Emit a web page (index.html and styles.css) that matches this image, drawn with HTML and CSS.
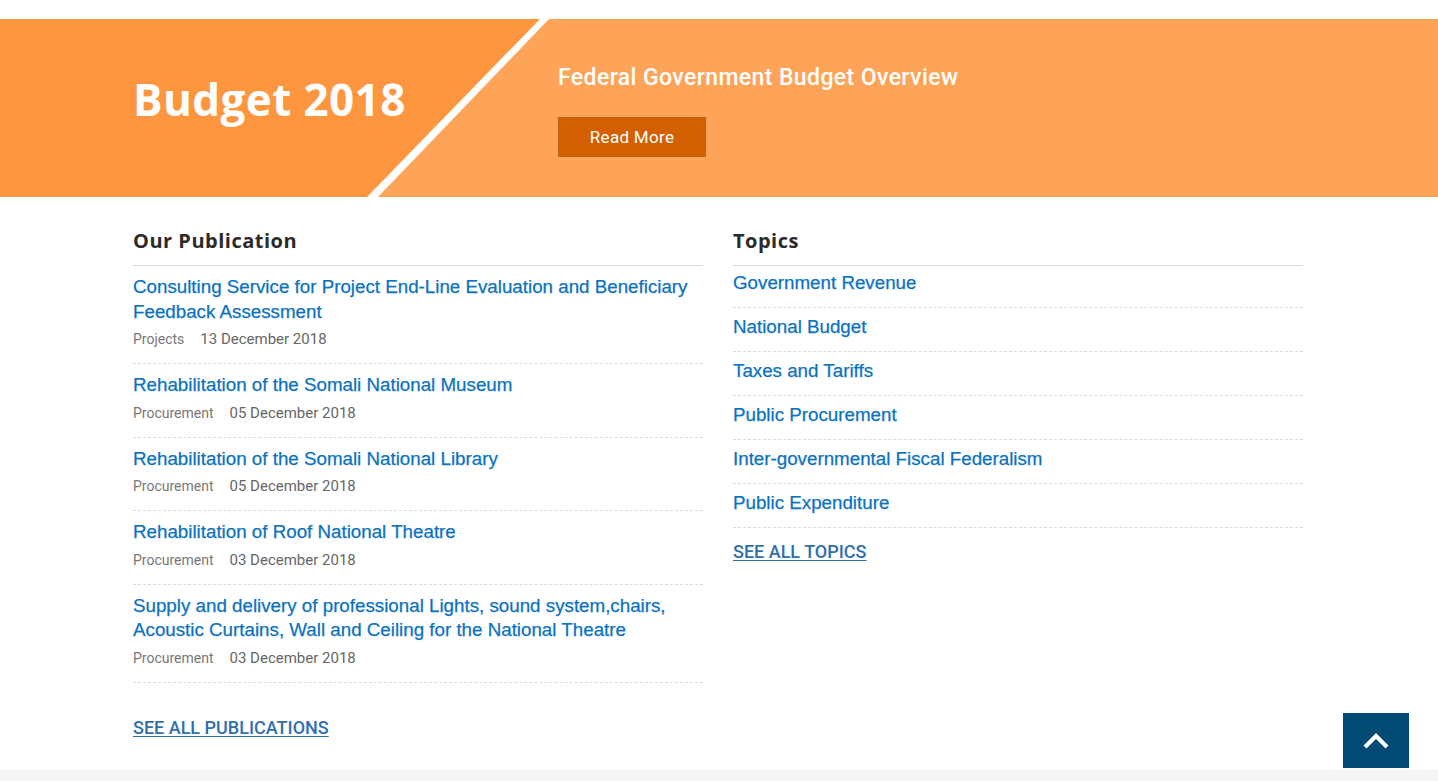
FILE: index.html
```html
<!DOCTYPE html>
<html lang="en">
<head>
  <meta charset="UTF-8">
  <meta name="viewport" content="width=device-width, initial-scale=1.0">
  <title>Budget 2018</title>
  <link rel="stylesheet" href="styles.css">
</head>
<body>

  <!-- Budget banner -->
  <section class="hero">
    <div class="hero-inner">
      <div class="hero-left">
        <h1 class="hero-title">Budget 2018</h1>
      </div>
      <div class="hero-right">
        <p class="hero-text">Federal Government Budget Overview</p>
        <a href="#" class="btn-read">Read More</a>
      </div>
    </div>
  </section>

  <main class="content">
    <div class="col">
      <h2 class="col-title">Our Publication</h2>
      <ul class="pub-list">
        <li class="pub">
          <a href="#" class="pub-link">Consulting Service for Project End-Line Evaluation and Beneficiary Feedback Assessment</a>
          <div class="pub-meta"><span class="pub-cat">Projects</span><span class="pub-date">13 December 2018</span></div>
        </li>
        <li class="pub">
          <a href="#" class="pub-link">Rehabilitation of the Somali National Museum</a>
          <div class="pub-meta"><span class="pub-cat">Procurement</span><span class="pub-date">05 December 2018</span></div>
        </li>
        <li class="pub">
          <a href="#" class="pub-link">Rehabilitation of the Somali National Library</a>
          <div class="pub-meta"><span class="pub-cat">Procurement</span><span class="pub-date">05 December 2018</span></div>
        </li>
        <li class="pub">
          <a href="#" class="pub-link">Rehabilitation of Roof National Theatre</a>
          <div class="pub-meta"><span class="pub-cat">Procurement</span><span class="pub-date">03 December 2018</span></div>
        </li>
        <li class="pub">
          <a href="#" class="pub-link">Supply and delivery of professional Lights, sound system,chairs, Acoustic Curtains, Wall and Ceiling for the National Theatre</a>
          <div class="pub-meta"><span class="pub-cat">Procurement</span><span class="pub-date">03 December 2018</span></div>
        </li>
      </ul>
      <a href="#" class="see-all see-all-pub">SEE ALL PUBLICATIONS</a>
    </div>

    <div class="col">
      <h2 class="col-title">Topics</h2>
      <ul class="topic-list">
        <li><a href="#">Government Revenue</a></li>
        <li><a href="#">National Budget</a></li>
        <li><a href="#">Taxes and Tariffs</a></li>
        <li><a href="#">Public Procurement</a></li>
        <li><a href="#">Inter-governmental Fiscal Federalism</a></li>
        <li><a href="#">Public Expenditure</a></li>
      </ul>
      <a href="#" class="see-all see-all-topics">SEE ALL TOPICS</a>
    </div>
  </main>

  <footer class="footer"></footer>

  <a href="#" class="to-top" aria-label="Back to top">
    <svg width="28" height="18" viewBox="0 0 28 18">
      <polyline points="3,15 14,4 25,15" fill="none" stroke="#fff" stroke-width="4.2"/>
    </svg>
  </a>

</body>
</html>
```

FILE: styles.css
```css
body {
  margin: 0;
  padding: 0;
  background: #fff;
  font-family: "Liberation Sans", Arial, sans-serif;
  color: #333;
}

a {
  text-decoration: none;
}

/* banner */
.hero {
  position: relative;
  margin-top: 19px;
  height: 178px;
  background: #fea459;
  overflow: hidden;
}
.hero::before,
.hero::after {
  content: "";
  position: absolute;
  top: 0;
  left: 0;
  width: 100%;
  height: 100%;
}
.hero::before {
  background: #fd963f;
  clip-path: polygon(0 0, 541px 0, 368px 100%, 0 100%);
}
.hero::after {
  background: #fff;
  clip-path: polygon(540px 0, 549px 0, 378px 100%, 367px 100%);
}
.hero-inner {
  position: relative;
  z-index: 1;
  width: 1172px;
  margin: 0 auto;
  display: flex;
}
.hero-left {
  width: 425px;
}
.hero-title {
  margin: 0;
  padding-top: 54px;
  font-family: "Open Sans", sans-serif;
  font-weight: 700;
  font-size: 44px;
  line-height: 52px;
  color: #fff;
  letter-spacing: 0.4px;
}
.hero-right {
  padding-top: 44px;
}
.hero-text {
  margin: 0;
  font-family: Roboto, sans-serif;
  font-weight: 500;
  font-size: 23px;
  line-height: 30px;
  letter-spacing: 0.4px;
  color: #fff;
}
.btn-read {
  display: block;
  width: 148px;
  height: 40px;
  margin-top: 24px;
  background: #d45f00;
  box-shadow: inset 0 0 0 1px #b9640f;
  color: #fff;
  font-family: Roboto, sans-serif;
  font-size: 17px;
  letter-spacing: 0.3px;
  line-height: 40px;
  text-align: center;
}

/* two column lists */
.content {
  width: 1172px;
  margin: 0 auto;
  display: grid;
  grid-template-columns: 570px 570px;
  gap: 30px;
  padding-top: 32px;
  padding-bottom: 32px;
}
.col-title {
  margin: 0;
  padding-bottom: 12px;
  border-bottom: 1px solid #d9d9d9;
  font-family: "Open Sans", sans-serif;
  font-weight: 700;
  font-size: 20px;
  line-height: 24px;
  letter-spacing: 0.5px;
  color: #2b2b2b;
}
.pub-list,
.topic-list {
  list-style: none;
  margin: 0;
  padding: 0;
}
.pub {
  padding: 9px 0 14px;
  border-bottom: 1px dashed #dcdcdc;
}
.pub-link,
.topic-list a {
  color: #0a72c1;
  font-size: 18.75px;
  line-height: 24.5px;
  -webkit-text-stroke: 0.25px currentColor;
}
.pub-link {
  display: block;
}
.pub-meta {
  margin-top: 5px;
  line-height: 20px;
  font-family: Roboto, sans-serif;
}
.pub-cat {
  font-size: 14px;
  color: #777;
  margin-right: 16px;
}
.pub-date {
  font-size: 15px;
  color: #666;
}
.topic-list {
  margin-top: -2px;
}
.topic-list li {
  padding: 7px 0 12px;
  border-bottom: 1px dashed #dcdcdc;
}
.topic-list a {
  display: block;
  line-height: 24px;
}
.see-all {
  display: inline-block;
  font-family: Roboto, sans-serif;
  font-weight: 500;
  font-size: 18px;
  line-height: 20px;
  color: #2f6fad;
  text-decoration: underline;
  text-underline-offset: 2px;
}
.see-all-pub {
  margin-top: 35px;
}
.see-all-topics {
  margin-top: 14px;
}

.footer {
  height: 40px;
  background: #f4f4f4;
}

.to-top {
  position: fixed;
  right: 29px;
  bottom: 13px;
  width: 66px;
  height: 55px;
  background: #004a73;
  display: flex;
  align-items: center;
  justify-content: center;
}
```
